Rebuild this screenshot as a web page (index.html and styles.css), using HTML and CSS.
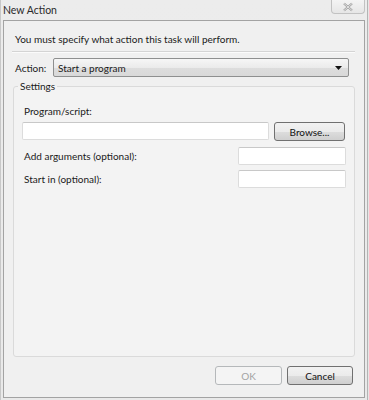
FILE: index.html
```html
<!DOCTYPE html>
<html>
<head>
<meta charset="utf-8">
<link rel="stylesheet" href="styles.css">
</head>
<body>
<div class="window">
  <div class="titlebar">
    <span class="title">New Action</span>
    <span class="close">
      <svg width="12" height="10" viewBox="0 0 12 10"><path d="M2 1.5 L10 8.5 M10 1.5 L2 8.5" stroke="#9a9a9a" stroke-width="2.2" fill="none"/><path d="M2 1.5 L10 8.5 M10 1.5 L2 8.5" stroke="#f4f4f4" stroke-width="0.8" fill="none"/></svg>
    </span>
  </div>
  <div class="client">
    <div class="intro">You must specify what action this task will perform.</div>
    <div class="sep"></div>
    <div class="action-row">
      <span class="action-label">Action:</span>
      <div class="select">
        <span>Start a program</span>
        <svg width="7" height="4" viewBox="0 0 7 4"><path d="M0 0 H7 L3.5 4 Z" fill="#111"/></svg>
      </div>
    </div>
    <fieldset class="group">
      <legend>Settings</legend>
      <div class="group-body">
        <div class="label prog-label">Program/script:</div>
        <div class="prog-row">
          <div class="input prog-input"></div>
          <div class="btn browse">Browse...</div>
        </div>
        <div class="opt-row args">
          <span class="label">Add arguments (optional):</span>
          <div class="input small-input"></div>
        </div>
        <div class="opt-row startin">
          <span class="label">Start in (optional):</span>
          <div class="input small-input"></div>
        </div>
      </div>
    </fieldset>
    <div class="footer">
      <div class="btn ok disabled">OK</div>
      <div class="btn cancel">Cancel</div>
    </div>
  </div>
</div>
</body>
</html>
```
FILE: styles.css
```css
* { box-sizing: border-box; }
html, body { margin: 0; padding: 0; }
body {
  width: 369px;
  height: 400px;
  background: #e6e6e6;
  font-family: Lato, "Noto Sans", sans-serif;
  font-size: 10px;
  color: #1a1a1a;
  overflow: hidden;
}
.window {
  width: 368px;
  height: 400px;
  background: linear-gradient(#ececec, #e9e9e9);
  border-left: 1px solid #c8c8c8;
  border-right: 1px solid #b4b4b4;
  display: flex;
  flex-direction: column;
}
.titlebar {
  height: 20px;
  display: flex;
  justify-content: space-between;
  align-items: flex-start;
  padding-left: 2px;
  padding-right: 5px;
}
.title {
  line-height: 20px;
  font-size: 10.5px;
  color: #2a2a2a;
}
.close {
  width: 34px;
  height: 14px;
  margin-right: -3px;
  border: 1px solid #c2c2c2;
  border-top: none;
  border-radius: 0 0 4px 4px;
  background: linear-gradient(#f4f4f4, #e6e6e6);
  display: flex;
  align-items: center;
  justify-content: center;
}
.client {
  margin: 0 2px 0 2px;
  height: 378px;
  border: 1px solid #a3a3a3;
  background: #f0f0f0;
  padding: 10px 9px 12px 8px;
  display: flex;
  flex-direction: column;
}
.intro {
  margin-left: 3px;
  line-height: 16px;
}
.sep {
  margin-top: 4px;
  height: 2px;
  border-top: 1px solid #d4d4d4;
  border-bottom: 1px solid #fbfbfb;
}
.action-row {
  margin-top: 5px;
  display: flex;
  align-items: center;
  height: 19px;
}
.action-label {
  width: 41px;
  padding-left: 3px;
  line-height: 16px;
}
.select {
  width: 296px;
  height: 19px;
  border: 1px solid #8e8f8f;
  border-radius: 2px;
  background: linear-gradient(#f6f6f6 0%, #ebebeb 50%, #dddddd 51%, #d9d9d9 100%);
  display: flex;
  align-items: center;
  justify-content: space-between;
  padding: 0 6px 0 4px;
  line-height: 16px;
}
.group {
  margin: 1px 0 0 1px;
  padding: 0 0 0 4px;
  border: 1px solid #dadada;
  border-radius: 3px;
  background: #f3f3f3;
  flex: 1;
  min-width: 0;
}
.group legend {
  padding: 0 2px;
  line-height: 16px;
}
.group-body {
  padding-left: 4px;
}
.label {
  padding-left: 2px;
  line-height: 16px;
}
.prog-label {
  margin-top: 9px;
}
.prog-row {
  margin-top: 3px;
  display: flex;
  align-items: flex-start;
}
.input {
  background: #fff;
  border: 1px solid #dcdcdc;
  border-top-color: #c8c8c8;
  border-radius: 2px;
  height: 18px;
}
.prog-input {
  width: 247px;
}
.btn {
  height: 19px;
  border: 1px solid #707070;
  border-radius: 3px;
  background: linear-gradient(#f2f2f2 0%, #ebebeb 50%, #dddddd 51%, #cfcfcf 100%);
  display: flex;
  align-items: center;
  justify-content: center;
  line-height: 16px;
  color: #111;
}
.browse {
  margin-left: 5px;
  width: 71px;
}
.opt-row {
  display: flex;
  justify-content: space-between;
  align-items: center;
  width: 324px;
}
.args { margin-top: 6px; }
.startin { margin-top: 5px; }
.small-input { width: 108px; }
.footer {
  margin-top: 9px;
  display: flex;
  justify-content: flex-end;
  gap: 5px;
  padding-right: 2px;
}
.ok { width: 67px; }
.cancel { width: 66px; }
.disabled {
  border-color: #b5b8ba;
  background: #f4f4f4;
  color: #a3a3a3;
}
```
